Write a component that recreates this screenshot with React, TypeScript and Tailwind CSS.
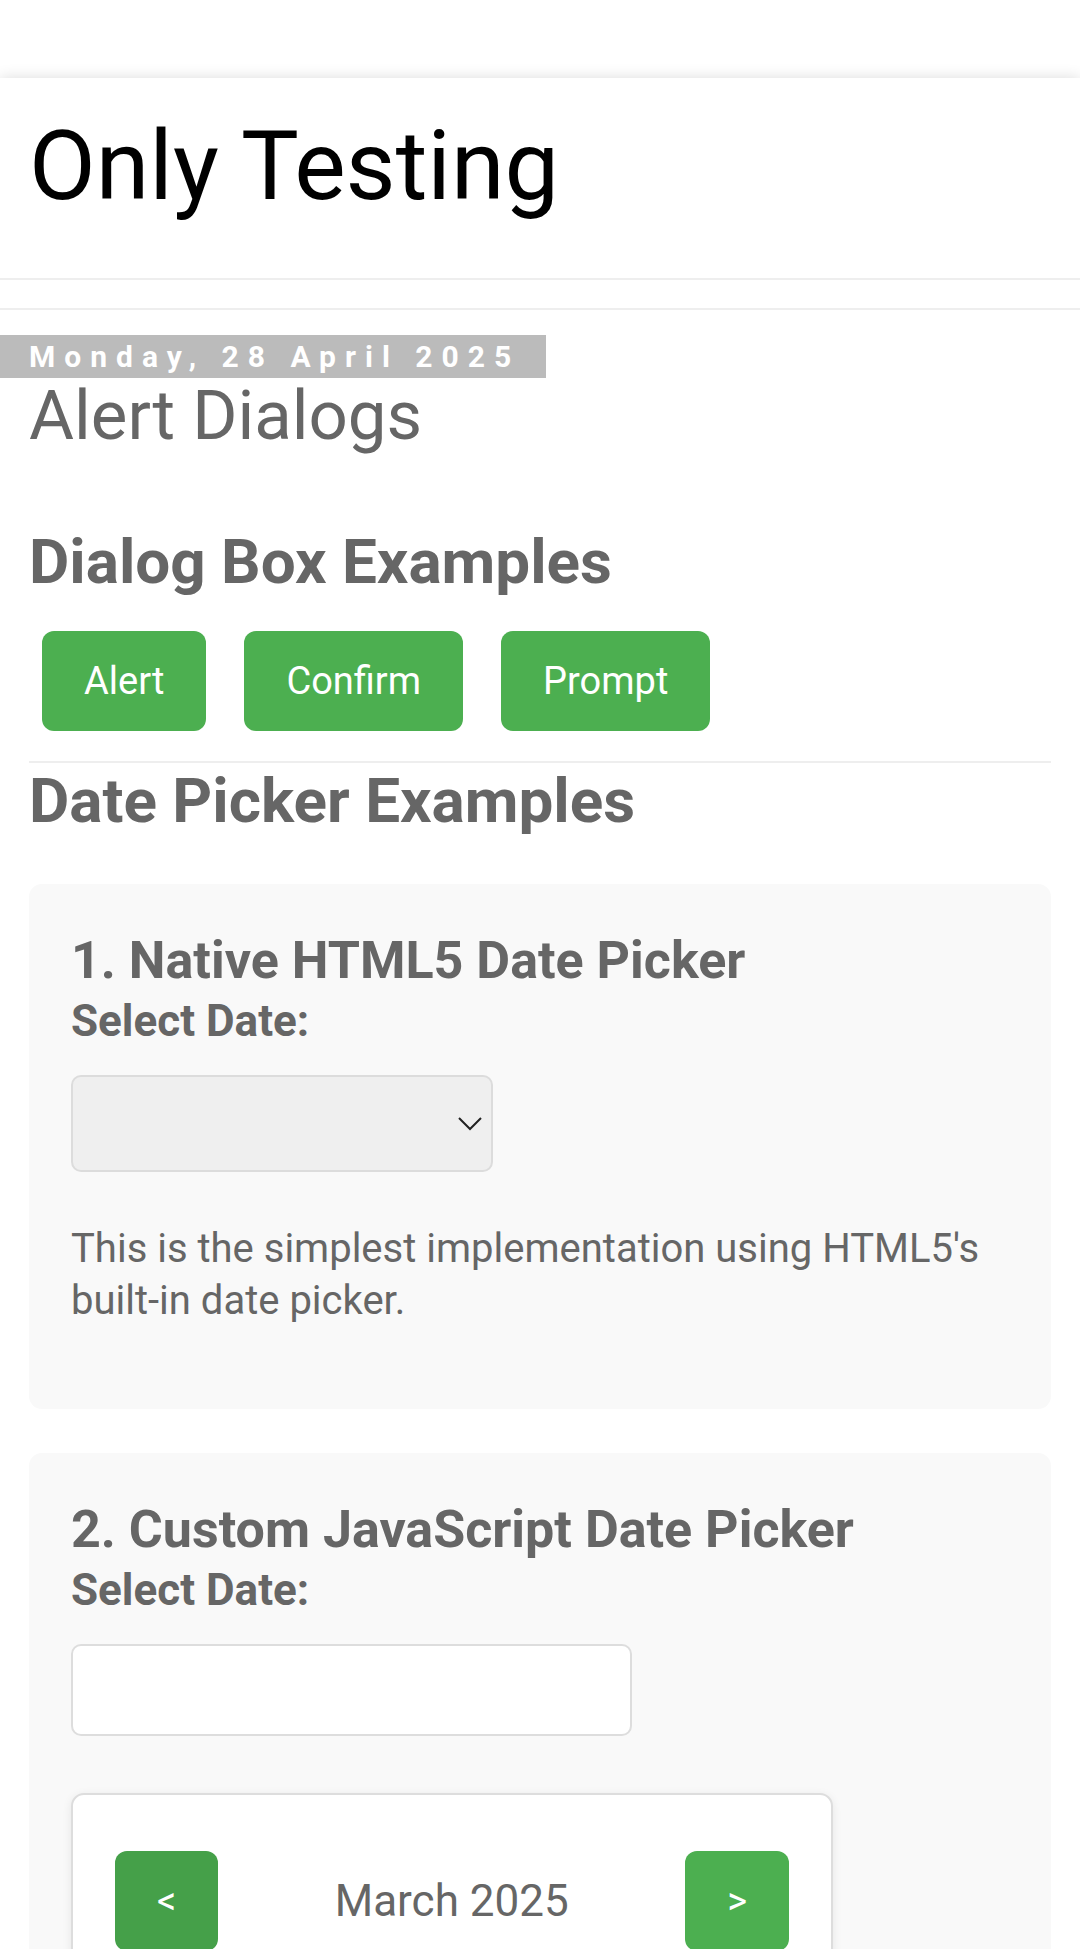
import React from 'react';

const font = { fontFamily: 'Roboto, "Noto Sans", sans-serif' };

const GreenButton = ({ label, dark = false }: { label: string; dark?: boolean }) => (
  <button
    className={
      'rounded-[12px] px-[42px] py-[29px] text-[38px] leading-[42px] text-white ' +
      (dark ? 'bg-[#45a049]' : 'bg-[#4caf50]')
    }
  >
    {label}
  </button>
);

const Chevron = () => (
  <svg width="24" height="14" viewBox="0 0 24 14" fill="none">
    <polyline points="1,1 12,12 23,1" stroke="#222" strokeWidth="2" />
  </svg>
);

const App = () => {
  return (
    <div className="min-h-[1949px] bg-white text-[#666666]" style={font}>
      <div className="h-[78px] bg-white" />

      <div className="relative bg-white pb-[120px] shadow-[0_0_14px_rgba(0,0,0,0.14)]">
        {/* Blog header */}
        <header className="px-[29px] pt-[31px]">
          <h1 className="text-[97px] font-normal leading-[115px] text-black">Only Testing</h1>
        </header>

        <div className="mt-[54px] h-[2px] bg-[#eeeeee]" />
        <div className="h-[28px]" />
        <div className="h-[2px] bg-[#eeeeee]" />

        <div className="mt-[25px]">
          <div className="inline-block bg-[#bbbbbb] pl-[29px] pr-[26px] text-[30px] font-bold leading-[43px] tracking-[9px] text-white">
            Monday, 28 April 2025
          </div>
        </div>

        <div className="px-[29px]">
          <h3 className="text-[69px] font-normal leading-[76px]">Alert Dialogs</h3>

          <h2 className="mt-[72px] text-[62px] font-bold leading-[72px]">Dialog Box Examples</h2>

          <div className="ml-[13px] mt-[33px] flex gap-[38px]">
            <GreenButton label="Alert" />
            <GreenButton label="Confirm" />
            <GreenButton label="Prompt" />
          </div>

          <div className="mt-[30px] h-[2px] bg-[#eeeeee]" />

          <h2 className="mt-[2px] text-[62px] font-bold leading-[72px]">Date Picker Examples</h2>

          {/* Native picker */}
          <div className="mt-[47px] rounded-[13px] bg-[#f9f9f9] px-[42px] pb-[82px] pt-[47px]">
            <h3 className="text-[52px] font-bold leading-[60px]">1. Native HTML5 Date Picker</h3>
            <label className="mt-[5px] block text-[44px] font-bold leading-[50px]">Select Date:</label>
            <div className="mt-[29px] flex h-[97px] w-[422px] items-center justify-end rounded-[10px] border-2 border-[#dcdcdc] bg-[#efefef] pr-[9px]">
              <Chevron />
            </div>
            <p className="mt-[51px] text-[40px] leading-[52px]">
              This is the simplest implementation using HTML5's built-in date picker.
            </p>
          </div>

          {/* Custom picker */}
          <div className="mt-[44px] rounded-[13px] bg-[#f9f9f9] px-[42px] pb-[82px] pt-[47px]">
            <h3 className="text-[52px] font-bold leading-[60px]">2. Custom JavaScript Date Picker</h3>
            <label className="mt-[5px] block text-[44px] font-bold leading-[50px]">Select Date:</label>
            <div className="mt-[29px] h-[92px] w-[561px] rounded-[10px] border-2 border-[#dddddd] bg-white" />

            <div className="mt-[57px] w-[762px] rounded-[13px] border-2 border-[#dddddd] bg-white px-[42px] pb-[40px] pt-[56px] shadow-[0_2px_10px_rgba(0,0,0,0.08)]">
              <div className="flex items-center justify-between">
                <GreenButton label="<" dark />
                <span className="text-[44px] leading-[52px] text-[#666666]">March 2025</span>
                <GreenButton label=">" />
              </div>
            </div>
          </div>
        </div>
      </div>
    </div>
  );
};

export default App;
